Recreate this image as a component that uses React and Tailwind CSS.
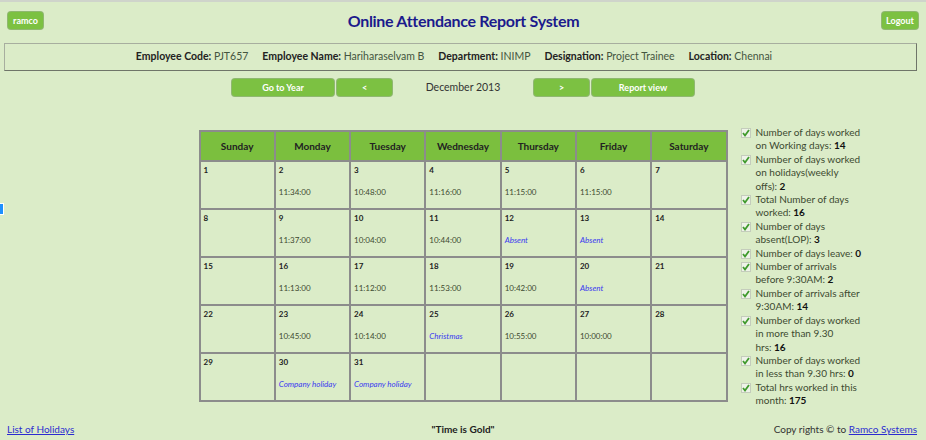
import React from 'react';

const weeks = [
  [{ d: 1 }, { d: 2, t: '11:34:00' }, { d: 3, t: '10:48:00' }, { d: 4, t: '11:16:00' }, { d: 5, t: '11:15:00' }, { d: 6, t: '11:15:00' }, { d: 7 }],
  [{ d: 8 }, { d: 9, t: '11:37:00' }, { d: 10, t: '10:04:00' }, { d: 11, t: '10:44:00' }, { d: 12, n: 'Absent' }, { d: 13, n: 'Absent' }, { d: 14 }],
  [{ d: 15 }, { d: 16, t: '11:13:00' }, { d: 17, t: '11:12:00' }, { d: 18, t: '11:53:00' }, { d: 19, t: '10:42:00' }, { d: 20, n: 'Absent' }, { d: 21 }],
  [{ d: 22 }, { d: 23, t: '10:45:00' }, { d: 24, t: '10:14:00' }, { d: 25, n: 'Christmas' }, { d: 26, t: '10:55:00' }, { d: 27, t: '10:00:00' }, { d: 28 }],
  [{ d: 29 }, { d: 30, n: 'Company holiday' }, { d: 31, n: 'Company holiday' }, {}, {}, {}, {}],
];

const dayNames = ['Sunday', 'Monday', 'Tuesday', 'Wednesday', 'Thursday', 'Friday', 'Saturday'];

// each stat: lines of label text, value appended to the last line
const stats = [
  { lines: ['Number of days worked', 'on Working days:'], v: 14 },
  { lines: ['Number of days worked', 'on holidays(weekly', 'offs):'], v: 2 },
  { lines: ['Total Number of days', 'worked:'], v: 16 },
  { lines: ['Number of days', 'absent(LOP):'], v: 3 },
  { lines: ['Number of days leave:'], v: 0 },
  { lines: ['Number of arrivals', 'before 9:30AM:'], v: 2 },
  { lines: ['Number of arrivals after', '9:30AM:'], v: 14 },
  { lines: ['Number of days worked', 'in more than 9.30', 'hrs:'], v: 16 },
  { lines: ['Number of days worked', 'in less than 9.30 hrs:'], v: 0 },
  { lines: ['Total hrs worked in this', 'month:'], v: 175 },
];

const CheckIcon = () => (
  <svg width="10" height="10" viewBox="0 0 10 10" className="shrink-0 mt-[2px]">
    <rect x="0.5" y="0.5" width="9" height="9" fill="#eef3e8" stroke="#c4ccbc" />
    <path d="M2 5 L4 7.5 L8 2" fill="none" stroke="#3f9a2c" strokeWidth="1.8" />
  </svg>
);

const GreenButton = ({ children, className = '' }) => (
  <button
    type="button"
    className={`h-[17px] rounded-[3px] bg-[#7cc142] text-white text-[9px] font-bold leading-none flex items-center justify-center shadow-[0_0_0_1px_#8fb870] ${className}`}
  >
    {children}
  </button>
);

export default function App() {
  return (
    <div className="relative w-[926px] h-[440px] bg-[#dbecc8] border-t-2 border-[#cfd4cb] font-['Lato',sans-serif] text-[#333] overflow-hidden">
      {/* stray marker on left edge */}
      <div className="absolute left-0 top-[201px] w-[4px] h-[12px] bg-[#1e90ff] border-r border-y border-white"></div>

      {/* Header */}
      <div className="h-[17px] mt-[10px] flex items-center justify-between px-2">
        <GreenButton className="w-[35px]">ramco</GreenButton>
        <h1 className="text-[16px] leading-none font-bold text-[#1b1a8c] tracking-[-0.3px] pl-[2px]">Online Attendance Report System</h1>
        <GreenButton className="w-[36px]">Logout</GreenButton>
      </div>

      {/* Employee info */}
      <div className="mx-1 mt-[14px] w-[913px] h-[28px] pr-[13px] border border-[#a7ae9f] border-b-[#6f7569] border-r-[#6f7569] flex items-center justify-center gap-[14px] text-[10.5px]">
        <span><b className="text-[#222]">Employee Code:</b> <span className="text-[#44553f]">PJT657</span></span>
        <span><b className="text-[#222]">Employee Name:</b> <span className="text-[#44553f]">Hariharaselvam B</span></span>
        <span><b className="text-[#222]">Department:</b> <span className="text-[#44553f]">INIMP</span></span>
        <span><b className="text-[#222]">Designation:</b> <span className="text-[#44553f]">Project Trainee</span></span>
        <span><b className="text-[#222]">Location:</b> <span className="text-[#44553f]">Chennai</span></span>
      </div>

      {/* Month nav */}
      <div className="mt-[8px] flex justify-center items-center gap-[3px]">
        <GreenButton className="w-[102px]">Go to Year</GreenButton>
        <GreenButton className="w-[55px]">&lt;</GreenButton>
        <div className="w-[136px] text-center text-[10.5px] text-[#333]">December 2013</div>
        <GreenButton className="w-[55px]">&gt;</GreenButton>
        <GreenButton className="w-[102px]">Report view</GreenButton>
      </div>

      {/* Calendar + stats */}
      <div className="mt-[34px] grid grid-cols-[1fr_auto_1fr] items-start">
        <div></div>
        <table className="border-collapse border-2 border-[#8c8c8c] w-[529px] table-fixed">
          <thead>
            <tr className="bg-[#7bbf3e] h-[30px]">
              {dayNames.map((n) => (
                <th key={n} className="border-2 border-[#8c8c8c] text-[10px] font-bold text-[#222]">{n}</th>
              ))}
            </tr>
          </thead>
          <tbody>
            {weeks.map((w, i) => (
              <tr key={i} className="h-[48px]">
                {w.map((c, j) => (
                  <td key={j} className="border-2 border-[#8c8c8c] align-top px-[3px] pt-[3px]">
                    {c.d && <div className="text-[8px] font-bold text-[#222] leading-[10px]">{c.d}</div>}
                    {c.t && <div className="mt-[12px] text-[8px] text-[#3d4a30] leading-[10px]">{c.t}</div>}
                    {c.n && <div className="mt-[12px] text-[8px] italic text-[#3a3af0] leading-[10px] whitespace-nowrap">{c.n}</div>}
                  </td>
                ))}
              </tr>
            ))}
          </tbody>
        </table>
        <ul className="pl-[13px] -mt-[4px] text-[10px] leading-[13.4px] text-[#3c4a30]">
          {stats.map((s, i) => (
            <li key={i} className="flex gap-[5px]">
              <CheckIcon />
              <div>
                {s.lines.map((l, k) => (
                  <div key={k}>
                    {l}
                    {k === s.lines.length - 1 && <b className="text-[#111]"> {s.v}</b>}
                  </div>
                ))}
              </div>
            </li>
          ))}
        </ul>
      </div>

      {/* Footer */}
      <div className="absolute left-0 right-0 bottom-[3px] px-[7px] flex justify-between items-center text-[10px]">
        <a href="#" className="text-[#2b2bd0] underline w-[200px]">List of Holidays</a>
        <b className="text-[#222]">"Time is Gold"</b>
        <span className="w-[200px] text-right pr-[2px] text-[#333]">
          Copy rights © to <a href="#" className="text-[#2b2bd0] underline">Ramco Systems</a>
        </span>
      </div>
    </div>
  );
}
